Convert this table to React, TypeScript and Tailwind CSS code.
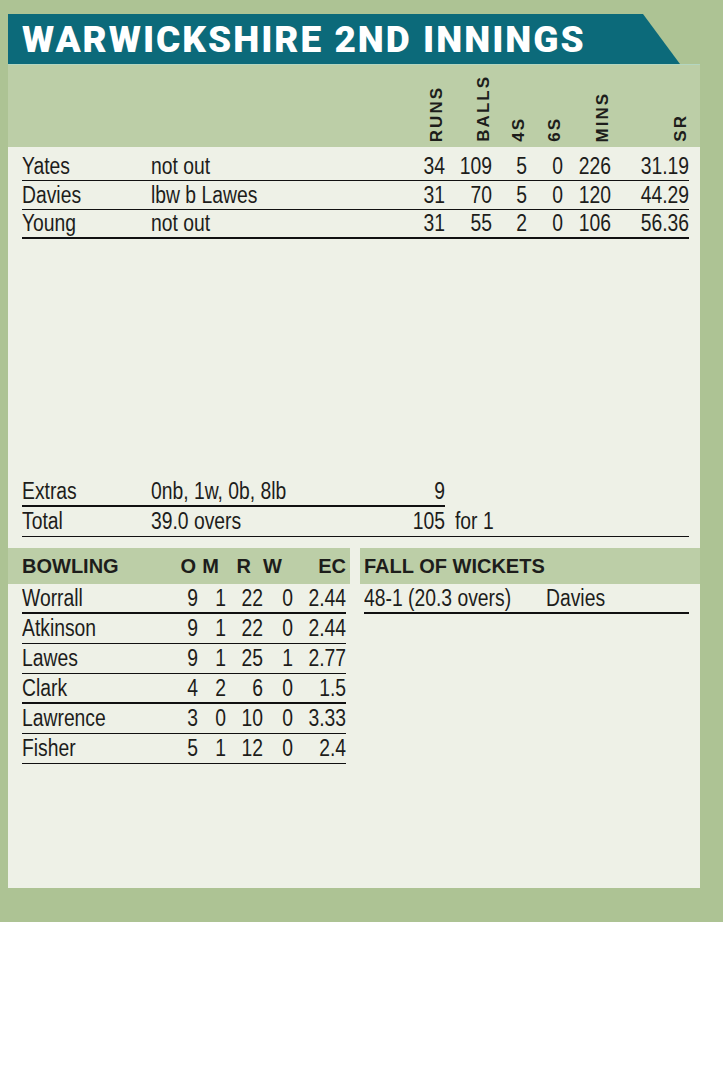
import React from 'react'

const batting = [
  { name: 'Yates', how: 'not out', r: 34, b: 109, f: 5, s: 0, m: 226, sr: '31.19', line: 'border-b' },
  { name: 'Davies', how: 'lbw b Lawes', r: 31, b: 70, f: 5, s: 0, m: 120, sr: '44.29', line: 'border-b' },
  { name: 'Young', how: 'not out', r: 31, b: 55, f: 2, s: 0, m: 106, sr: '56.36', line: 'border-b-2' },
]

const bowling = [
  { name: 'Worrall', o: 9, m: 1, r: 22, w: 0, ec: '2.44', line: 'border-b-2' },
  { name: 'Atkinson', o: 9, m: 1, r: 22, w: 0, ec: '2.44', line: 'border-b' },
  { name: 'Lawes', o: 9, m: 1, r: 25, w: 1, ec: '2.77', line: 'border-b' },
  { name: 'Clark', o: 4, m: 2, r: 6, w: 0, ec: '1.5', line: 'border-b-2' },
  { name: 'Lawrence', o: 3, m: 0, r: 10, w: 0, ec: '3.33', line: 'border-b' },
  { name: 'Fisher', o: 5, m: 1, r: 12, w: 0, ec: '2.4', line: 'border-b' },
]

const batCols = 'grid grid-cols-[129px_254px_40px_47px_35px_36px_48px_78px]'
const bowlCols = 'grid grid-cols-[146px_30px_28px_37px_30px_53px]'

// condensed look: Liberation Sans squeezed horizontally
function L({ children }: { children: React.ReactNode }) {
  return <span className="block whitespace-nowrap origin-left scale-x-[0.84]">{children}</span>
}

function R({ children }: { children: React.ReactNode }) {
  return <span className="block whitespace-nowrap text-right origin-right scale-x-[0.84]">{children}</span>
}

function VLabel({ children }: { children: React.ReactNode }) {
  return (
    <span className="justify-self-end [writing-mode:vertical-rl] rotate-180 text-[17px] font-bold tracking-[2px] leading-none font-['Liberation_Sans',sans-serif] text-[#1d1d1b]">
      {children}
    </span>
  )
}

export default function App() {
  return (
    <div className="w-[723px] h-[1087px] bg-white">
      <div className="h-[922px] bg-[#adc394] pt-[14px] pl-[8px] pr-[23px]">
        {/* Title banner */}
        <div className="w-[672px] h-[50px] bg-[#0c6a7a] [clip-path:polygon(0_0,635px_0,100%_100%,0_100%)] flex items-center pl-[14px]">
          <h1 className="text-white text-[37px] font-black leading-none tracking-[2px] font-['Roboto',sans-serif]">
            WARWICKSHIRE 2ND INNINGS
          </h1>
        </div>

        <div className="h-[824px] bg-[#eef1e7] text-[23px] leading-none text-[#1d1d1b] font-['Liberation_Sans',sans-serif]">
          {/* Batting header */}
          <div className="h-[83px] bg-[#bccea7] border-t border-[#b4d6c0] pl-[14px] pb-[5px] flex items-end">
            <div className={`${batCols} items-end w-[667px]`}>
              <span />
              <span />
              <VLabel>RUNS</VLabel>
              <VLabel>BALLS</VLabel>
              <VLabel>4S</VLabel>
              <VLabel>6S</VLabel>
              <VLabel>MINS</VLabel>
              <VLabel>SR</VLabel>
            </div>
          </div>

          {/* Batting rows */}
          <div className="pl-[14px] pt-[5px]">
            {batting.map((p) => (
              <div key={p.name} className={`${batCols} w-[667px] h-[29px] items-center border-[#111] ${p.line}`}>
                <L>{p.name}</L>
                <L>{p.how}</L>
                <R>{p.r}</R>
                <R>{p.b}</R>
                <R>{p.f}</R>
                <R>{p.s}</R>
                <R>{p.m}</R>
                <R>{p.sr}</R>
              </div>
            ))}

            <div className="h-[239px]" />

            <div className="grid grid-cols-[129px_254px_40px] w-[423px] h-[29px] items-center border-b-2 border-[#111]">
              <L>Extras</L>
              <L>0nb, 1w, 0b, 8lb</L>
              <R>9</R>
            </div>
            <div className="grid grid-cols-[129px_254px_40px_1fr] w-[667px] h-[30px] items-center border-b border-[#111]">
              <L>Total</L>
              <L>39.0 overs</L>
              <R>105</R>
              <span className="pl-[10px]">
                <L>for 1</L>
              </span>
            </div>
          </div>

          {/* Bowling + fall of wickets */}
          <div className="flex gap-[10px] mt-[11px]">
            <div className="w-[342px]">
              <div className="h-[36px] bg-[#bccea7] pl-[14px] pr-[4px] flex items-center text-[20px] font-bold">
                <div className={`${bowlCols} w-[324px]`}>
                  <span>BOWLING</span>
                  <span className="text-right pr-[2px]">O</span>
                  <span className="text-right pr-[7px]">M</span>
                  <span className="text-right pr-[12px]">R</span>
                  <span className="text-right pr-[12px]">W</span>
                  <span className="text-right">EC</span>
                </div>
              </div>
              <div className="pl-[14px]">
                {bowling.map((b) => (
                  <div key={b.name} className={`${bowlCols} w-[324px] h-[30px] items-center border-[#111] ${b.line}`}>
                    <L>{b.name}</L>
                    <R>{b.o}</R>
                    <R>{b.m}</R>
                    <R>{b.r}</R>
                    <R>{b.w}</R>
                    <R>{b.ec}</R>
                  </div>
                ))}
              </div>
            </div>

            <div className="w-[340px]">
              <div className="h-[36px] bg-[#bccea7] pl-[4px] flex items-center text-[20px] font-bold">
                FALL OF WICKETS
              </div>
              <div className="pl-[4px] pr-[11px]">
                <div className="grid grid-cols-[182px_1fr] h-[30px] items-center border-b-2 border-[#111]">
                  <L>48-1 (20.3 overs)</L>
                  <L>Davies</L>
                </div>
              </div>
            </div>
          </div>
        </div>
      </div>
    </div>
  )
}
